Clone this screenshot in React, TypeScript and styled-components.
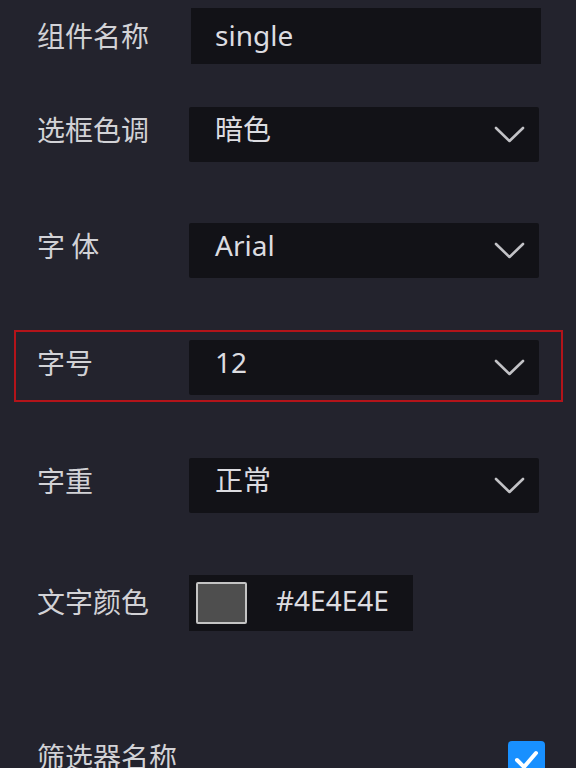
import React from "react";
import styled, { createGlobalStyle } from "styled-components";

const Global = createGlobalStyle`
  html, body { margin: 0; padding: 0; background: #23232d; }
  body { font-family: "Noto Sans", "Noto Sans CJK SC", sans-serif; overflow: hidden; }
`;

const Panel = styled.div`
  width: 576px;
  height: 768px;
  overflow: hidden;
  background: #23232d;
  display: flex;
  flex-direction: column;
`;

const Section = styled.div`
  padding: 0 37px;
  display: flex;
  flex-direction: column;
`;

const Row = styled.div<{ $mt: number; $highlight?: boolean }>`
  position: relative;
  display: flex;
  align-items: center;
  height: 56px;
  margin-top: ${(p) => p.$mt}px;
  ${(p) =>
    p.$highlight &&
    `
    &::before {
      content: "";
      position: absolute;
      top: -9px;
      bottom: -7px;
      left: -23px;
      right: -24px;
      border: 2px solid #b3141a;
      pointer-events: none;
    }
  `}
`;

const Label = styled.div<{ $dy: number }>`
  width: 152px;
  flex: none;
  font-family: "Noto Sans CJK SC", sans-serif;
  font-size: 28px;
  line-height: 1;
  color: #d2d2d6;
  margin-top: ${(p) => -5 + p.$dy}px;
  white-space: pre;
`;

const Input = styled.div`
  flex: 1;
  height: 56px;
  margin-left: 2px;
  margin-right: -2px;
  background: #121217;
  display: flex;
  align-items: center;
  padding-left: 24px;
  font-size: 28px;
  color: #dcdce0;
`;

const Select = styled.div`
  flex: 1;
  height: 55px;
  background: #121217;
  border-radius: 2px;
  display: flex;
  align-items: center;
  justify-content: space-between;
  padding: 0 14px 0 26px;
  font-size: 28px;
  color: #dcdce0;
`;

const Value = styled.span<{ $dy: number }>`
  font-family: "Noto Sans", "Noto Sans CJK SC", sans-serif;
  line-height: 1;
  margin-top: ${(p) => -4 + p.$dy}px;
`;

const ColorBox = styled.div`
  width: 224px;
  height: 56px;
  background: #121217;
  display: flex;
  align-items: center;
  padding-left: 7px;
  box-sizing: border-box;
`;

const Swatch = styled.div<{ $color: string }>`
  width: 51px;
  height: 42px;
  box-sizing: border-box;
  border: 2px solid #c4c4c4;
  border-radius: 2px;
  background: ${(p) => p.$color};
`;

const HexText = styled.span`
  margin-left: 29px;
  font-size: 28px;
  color: #dcdce0;
  line-height: 1;
  margin-top: -6px;
`;

const Divider = styled.div`
  height: 2px;
  background: #1b1b22;
  margin-top: 75px;
`;

const CheckRow = styled.div`
  display: flex;
  align-items: flex-start;
  justify-content: space-between;
  padding: 0 31px 0 37px;
  margin-top: 35px;
`;

const CheckLabel = styled.div`
  font-family: "Noto Sans CJK SC", sans-serif;
  font-size: 28px;
  line-height: 1;
  color: #d2d2d6;
  margin-top: 1px;
`;

const Checkbox = styled.div`
  width: 37px;
  height: 37px;
  border-radius: 4px;
  background: #1890ff;
  display: flex;
  align-items: center;
  justify-content: center;
`;

const Chevron = () => (
  <svg width="31" height="17" viewBox="0 0 31 17">
    <polyline
      points="2,2 15.5,15 29,2"
      fill="none"
      stroke="#c2c2c6"
      strokeWidth="2.6"
      strokeLinecap="round"
      strokeLinejoin="round"
    />
  </svg>
);

const selects = [
  { label: "选框色调", value: "暗色", mt: 42 },
  { label: "字 体", value: "Arial", mt: 60 },
  { label: "字号", value: "12", mt: 61, highlight: true },
  { label: "字重", value: "正常", mt: 62 },
];

export default function App() {
  return (
    <Panel>
      <Global />
      <Section>
        <Row $mt={8}>
          <Label $dy={2}>组件名称</Label>
          <Input>
            <Value $dy={2}>single</Value>
          </Input>
        </Row>
        {selects.map((s) => (
          <Row key={s.label} $mt={s.mt} $highlight={s.highlight}>
            <Label $dy={-5}>{s.label}</Label>
            <Select>
              <Value $dy={-6}>{s.value}</Value>
              <Chevron />
            </Select>
          </Row>
        ))}
        <Row $mt={62}>
          <Label $dy={0}>文字颜色</Label>
          <ColorBox>
            <Swatch $color="#4e4e4e" />
            <HexText>#4E4E4E</HexText>
          </ColorBox>
        </Row>
      </Section>
      <Divider />
      <CheckRow>
        <CheckLabel>筛选器名称</CheckLabel>
        <Checkbox>
          <svg width="37" height="37" viewBox="0 0 37 37">
            <polyline
              points="9,19 16,26 28,12"
              fill="none"
              stroke="#ffffff"
              strokeWidth="4"
              strokeLinecap="round"
              strokeLinejoin="round"
            />
          </svg>
        </Checkbox>
      </CheckRow>
    </Panel>
  );
}
